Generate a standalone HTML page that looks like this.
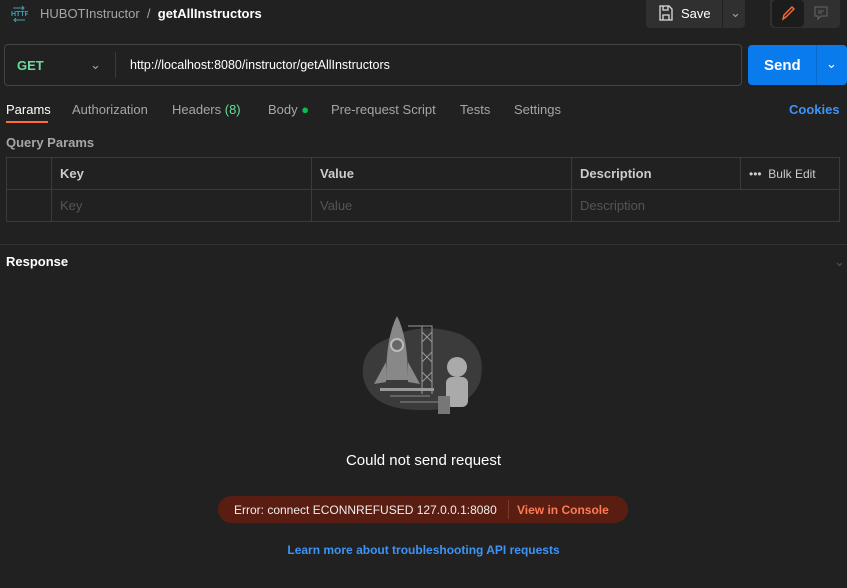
<!DOCTYPE html><html><head><style>
body{margin:0;width:847px;height:588px;background:#212121;font-family:"Liberation Sans",sans-serif;color:#a6a6a6;font-size:13px;position:relative;overflow:hidden}
.a{position:absolute}
td{border:1px solid #3a3a3a;height:32px;padding:0 8px;box-sizing:border-box}
</style></head><body>
<svg class="a" style="left:10px;top:4px" width="18" height="18"><text x="1" y="12" font-size="7" fill="#3aa0b0" font-family="Liberation Sans" font-weight="bold">HTTP</text><path d="M3 4 H14 M12 2 L14 4 L12 6 M15 16 H4 M6 14 L4 16 L6 18" stroke="#3aa0b0" fill="none"/></svg>
<div class="a" style="left:40px;top:6px;font-size:13px">HUBOTInstructor &nbsp;/&nbsp; <b style="color:#fff">getAllInstructors</b></div>
<div class="a" style="left:646px;top:0;width:99px;height:28px;background:#303030;border-radius:0 0 4px 4px"></div>
<div class="a" style="left:722px;top:0;width:1px;height:28px;background:#212121"></div>
<svg class="a" style="left:658px;top:5px" width="16" height="16"><path d="M2 1 H11 L14 4 V15 H2Z M5 1 V5 H10 V1 M5 15 V10 H11 V15" stroke="#ddd" fill="none" stroke-width="1.3"/></svg>
<div class="a" style="left:681px;top:6px;color:#fff;font-size:13px">Save</div>
<div class="a" style="left:730px;top:5px">⌄</div>
<div class="a" style="left:770px;top:0;width:70px;height:28px;background:#303030;border-radius:0 0 4px 4px"></div>
<div class="a" style="left:772px;top:0;width:32px;height:27px;background:#1c1c1c;border-radius:4px"></div>
<svg class="a" style="left:780px;top:5px" width="16" height="16"><path d="M3 14 L4 10 L12 2 L14 4 L6 12 Z" stroke="#ff6c37" fill="none" stroke-width="1.4"/></svg>
<svg class="a" style="left:813px;top:5px" width="16" height="16"><path d="M2 2 H14 V11 H8 L5 14 V11 H2Z M5 6 H11 M5 8 H9" stroke="#666" fill="none"/></svg>
<div class="a" style="left:4px;top:44px;width:736px;height:40px;border:1px solid #444;border-radius:4px"></div>
<div class="a" style="left:17px;top:58px;color:#6bdd9a;font-weight:bold">GET</div>
<div class="a" style="left:90px;top:57px">⌄</div>
<div class="a" style="left:115px;top:52px;width:1px;height:26px;background:#3a3a3a"></div>
<div class="a" style="left:130px;top:58px;color:#fff;font-size:12.5px">http://localhost:8080/instructor/getAllInstructors</div>
<div class="a" style="left:748px;top:45px;width:99px;height:40px;background:#097bed;border-radius:4px"></div>
<div class="a" style="left:816px;top:45px;width:1px;height:40px;background:#0a6acb"></div>
<div class="a" style="left:764px;top:57px;color:#fff;font-weight:bold;font-size:15px">Send</div>
<div class="a" style="left:826px;top:56px;color:#fff">⌄</div>
<div class="a" style="top:102px;left:6px;color:#fff">Params</div>
<div class="a" style="left:6px;top:121px;width:42px;height:2px;background:#ff6c37"></div>
<div class="a" style="top:102px;left:72px">Authorization</div>
<div class="a" style="top:102px;left:172px">Headers <span style="color:#6bdd9a">(8)</span></div>
<div class="a" style="top:102px;left:268px">Body <span style="color:#0cbb52">●</span></div>
<div class="a" style="top:102px;left:331px">Pre-request Script</div>
<div class="a" style="top:102px;left:460px">Tests</div>
<div class="a" style="top:102px;left:514px">Settings</div>
<div class="a" style="top:102px;left:789px;color:#3d94f6;font-weight:bold">Cookies</div>
<div class="a" style="top:135px;left:6px;font-weight:bold">Query Params</div>
<table class="a" style="left:6px;top:157px;border-collapse:collapse;width:834px;table-layout:fixed">
<tr style="font-weight:bold;color:#ccc"><td style="width:45px"></td><td style="width:260px">Key</td><td style="width:260px">Value</td><td style="width:169px">Description</td><td style="font-weight:normal;font-size:12px">••• &nbsp;Bulk Edit</td></tr>
<tr style="color:#555"><td></td><td>Key</td><td>Value</td><td colspan=2>Description</td></tr></table>
<div class="a" style="left:0;top:244px;width:847px;height:1px;background:#333"></div>
<div class="a" style="top:254px;left:6px;color:#fff;font-weight:bold">Response</div>
<div class="a" style="top:254px;left:834px;color:#555">⌄</div>
<svg class="a" style="left:360px;top:312px" width="130" height="110">
<path d="M25 28 Q60 8 100 22 Q128 35 120 70 Q108 100 60 98 Q10 98 3 65 Q0 38 25 28Z" fill="#3b3b3b"/>
<path d="M37 4 Q26 25 26 68 L48 68 Q48 25 37 4Z" fill="#888"/><circle cx="37" cy="33" r="6" fill="#666" stroke="#bbb" stroke-width="2"/>
<path d="M26 50 L14 72 L26 70Z M48 50 L60 72 L48 70Z" fill="#888"/>
<path d="M48 14 H72 V82 M62 14 V82 M62 20 L72 30 M72 20 L62 30 M62 40 L72 50 M72 40 L62 50 M62 60 L72 70 M72 60 L62 70" stroke="#999" fill="none"/>
<rect x="20" y="76" width="54" height="3" fill="#999"/>
<path d="M30 84 H70 M40 90 H80" stroke="#888"/>
<circle cx="97" cy="55" r="10" fill="#aaa"/><rect x="86" y="65" width="22" height="30" rx="6" fill="#aaa"/><rect x="78" y="84" width="12" height="18" fill="#777"/>
</svg>
<div class="a" style="left:0;width:847px;top:452px;text-align:center;color:#fff;font-size:15px">Could not send request</div>
<div class="a" style="left:218px;top:496px;width:410px;height:27px;background:#5a1d12;border-radius:14px"></div>
<div class="a" style="left:234px;top:503px;color:#eee;font-size:12px">Error: connect ECONNREFUSED 127.0.0.1:8080</div>
<div class="a" style="left:508px;top:500px;width:1px;height:19px;background:#7a3a2a"></div>
<div class="a" style="left:517px;top:503px;color:#ff7b55;font-weight:bold;font-size:12px">View in Console</div>
<div class="a" style="left:0;width:847px;top:543px;text-align:center;color:#3d94f6;font-weight:bold;font-size:12px">Learn more about troubleshooting API requests</div>
</body></html>
